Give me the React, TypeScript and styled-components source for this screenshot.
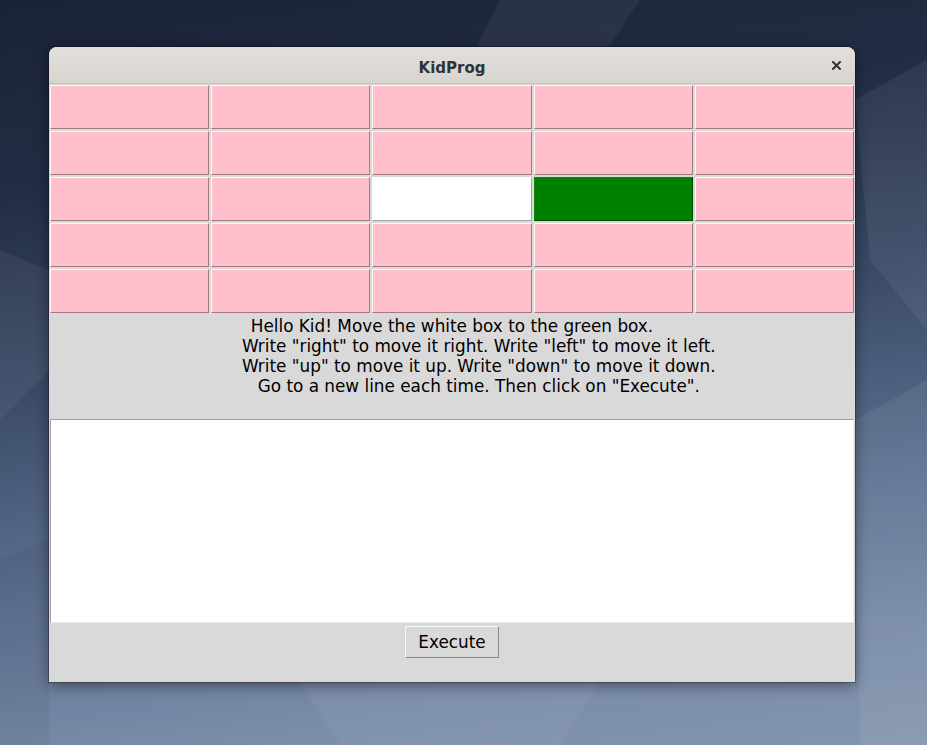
import React from "react";
import styled, { createGlobalStyle } from "styled-components";

const GlobalStyle = createGlobalStyle`
  html, body {
    margin: 0;
    padding: 0;
    background: #1c2539;
  }
  * { box-sizing: border-box; }
`;

const Desktop = styled.div`
  position: relative;
  width: 927px;
  height: 745px;
  overflow: hidden;
  padding: 47px 0 0 49px;
  background: linear-gradient(172deg, #1a2236 0%, #222d45 22%, #3a4a66 45%, #5d7090 68%, #7a8ca8 88%, #8495ae 100%);
`;

const Wallpaper = styled.svg`
  position: absolute;
  inset: 0;
  width: 927px;
  height: 745px;
`;

const Window = styled.div`
  position: relative;
  width: 806px;
  height: 635px;
  display: flex;
  flex-direction: column;
  background: #d9d9d9;
  border-radius: 8px 8px 0 0;
  box-shadow: 0 0 0 1px rgba(0, 0, 0, 0.25), 0 3px 14px rgba(0, 0, 0, 0.45);
`;

const TitleBar = styled.div`
  height: 37px;
  flex: none;
  display: grid;
  grid-template-columns: 1fr auto 1fr;
  align-items: center;
  border-bottom: 1px solid #c3c0bc;
  border-radius: 8px 8px 0 0;
  background: linear-gradient(#e1dedb, #d8d5d1);
`;

const Title = styled.div`
  grid-column: 2;
  font-family: "DejaVu Sans", sans-serif;
  font-weight: bold;
  font-size: 15px;
  color: #2e3436;
  padding-top: 5px;
`;

const CloseButton = styled.div`
  grid-column: 3;
  justify-self: end;
  margin-right: 14px;
  display: flex;
  align-items: center;
  justify-content: center;
  width: 10px;
  height: 10px;
`;

const Board = styled.div`
  flex: none;
  display: grid;
  grid-template-columns: repeat(5, 1fr);
  grid-auto-rows: 44px;
  gap: 2px;
  padding: 1px;
`;

type Tone = "pink" | "white" | "green";

const tones: Record<Tone, { bg: string; light: string; dark: string }> = {
  pink: { bg: "#ffc0cb", light: "#fff4f6", dark: "#a27980" },
  white: { bg: "#ffffff", light: "#ffffff", dark: "#a3a3a3" },
  green: { bg: "#008000", light: "#0f870f", dark: "#004a00" },
};

const Cell = styled.div<{ $tone: Tone }>`
  background: ${(p) => tones[p.$tone].bg};
  border: 1px solid;
  border-color: ${(p) => tones[p.$tone].light} ${(p) => tones[p.$tone].dark}
    ${(p) => tones[p.$tone].dark} ${(p) => tones[p.$tone].light};
`;

const Instructions = styled.div`
  flex: none;
  height: 105px;
  padding-top: 2px;
  font-family: "DejaVu Sans", sans-serif;
  font-size: 16.85px;
  line-height: 20px;
  color: #000;
  text-align: center;
  white-space: pre;
`;

const Editor = styled.textarea`
  flex: none;
  display: block;
  height: 204px;
  margin: 0 1px;
  padding: 2px 4px;
  border: 1px solid;
  border-color: #a0a0a0 #ececec #ececec #a0a0a0;
  background: #ffffff;
  resize: none;
  outline: none;
  font-family: "DejaVu Sans Mono", monospace;
  font-size: 14px;
`;

const Footer = styled.div`
  flex: 1;
  display: flex;
  justify-content: center;
  align-items: flex-start;
  padding-top: 3px;
`;

const ExecuteButton = styled.button`
  width: 94px;
  height: 32px;
  padding: 0;
  margin: 0;
  background: #d9d9d9;
  border: 1px solid;
  border-color: #f7f7f7 #8a8a8a #8a8a8a #f7f7f7;
  font-family: "DejaVu Sans", sans-serif;
  font-size: 16.85px;
  line-height: 20px;
  color: #000;
  cursor: pointer;
`;

const board: Tone[][] = [
  ["pink", "pink", "pink", "pink", "pink"],
  ["pink", "pink", "pink", "pink", "pink"],
  ["pink", "pink", "white", "green", "pink"],
  ["pink", "pink", "pink", "pink", "pink"],
  ["pink", "pink", "pink", "pink", "pink"],
];

const text =
  'Hello Kid! Move the white box to the green box.\n' +
  '          Write "right" to move it right. Write "left" to move it left.\n' +
  '          Write "up" to move it up. Write "down" to move it down.\n' +
  '          Go to a new line each time. Then click on "Execute".';

export default function App() {
  return (
    <>
      <GlobalStyle />
      <Desktop>
        <Wallpaper viewBox="0 0 927 745">
          <polygon points="500,0 640,0 560,120 470,60" fill="#ffffff" opacity="0.05" />
          <polygon points="0,250 120,300 0,420" fill="#ffffff" opacity="0.05" />
          <polygon points="855,100 927,60 927,330 870,260" fill="#ffffff" opacity="0.06" />
          <polygon points="855,420 927,380 927,745 860,745" fill="#ffffff" opacity="0.06" />
          <polygon points="0,560 49,540 49,745 0,745" fill="#000000" opacity="0.05" />
          <polygon points="300,682 600,682 560,745 340,745" fill="#ffffff" opacity="0.05" />
        </Wallpaper>
        <Window>
          <TitleBar>
            <Title>KidProg</Title>
            <CloseButton>
              <svg width="9" height="9" viewBox="0 0 9 9">
                <path d="M1 1 L8 8 M8 1 L1 8" stroke="#2e3436" strokeWidth="2" strokeLinecap="square" />
              </svg>
            </CloseButton>
          </TitleBar>
          <Board>
            {board.flatMap((row, r) =>
              row.map((tone, c) => <Cell key={`${r}-${c}`} $tone={tone} />)
            )}
          </Board>
          <Instructions>{text}</Instructions>
          <Editor spellCheck={false} />
          <Footer>
            <ExecuteButton>Execute</ExecuteButton>
          </Footer>
        </Window>
      </Desktop>
    </>
  );
}
